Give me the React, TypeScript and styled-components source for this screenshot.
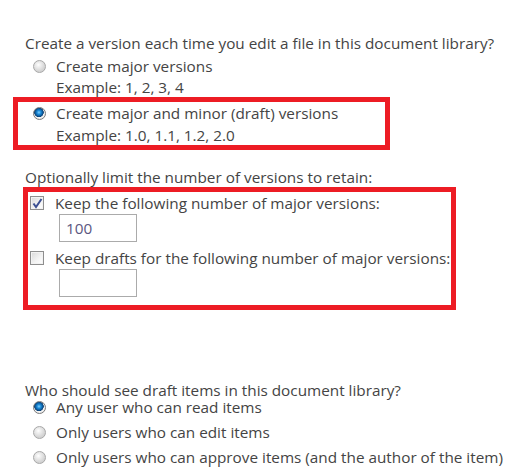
import React from "react";
import styled, { createGlobalStyle } from "styled-components";

const Global = createGlobalStyle`
  html, body { margin: 0; padding: 0; background: #fff; }
  body { font-family: "Open Sans", "Noto Sans", sans-serif; color: #444; }
`;

const Page = styled.div`
  width: 524px;
  height: 473px;
  padding-top: 31px;
  box-sizing: border-box;
  font-size: 15.3px;
  overflow: hidden;
`;

const Question = styled.div<{ $h: number }>`
  padding-left: 25px;
  height: ${(p) => p.$h}px;
  line-height: ${(p) => p.$h}px;
  white-space: nowrap;
`;

const Options = styled.div<{ $indent: number }>`
  padding-left: ${(p) => p.$indent}px;
`;

const Highlight = styled.div<{ $left: number; $width: number; $pad: number; $pb?: number }>`
  margin-left: ${(p) => p.$left}px;
  width: ${(p) => p.$width}px;
  box-sizing: border-box;
  border: 5px solid #ed1c24;
  padding-left: ${(p) => p.$pad}px;
  padding-bottom: ${(p) => p.$pb ?? 0}px;
`;

const Row = styled.div<{ $h?: number; $pb?: number }>`
  display: flex;
  align-items: center;
  height: ${(p) => p.$h ?? 22}px;
  line-height: ${(p) => p.$h ?? 22}px;
  margin-bottom: ${(p) => p.$pb ?? 0}px;
  white-space: nowrap;
`;

const Sub = styled.div<{ $h?: number }>`
  padding-left: 23px;
  height: ${(p) => p.$h ?? 22}px;
  line-height: ${(p) => p.$h ?? 22}px;
  white-space: nowrap;
`;

const RadioDot = styled.span<{ $on?: boolean }>`
  flex: none;
  width: 13px;
  height: 13px;
  border-radius: 50%;
  box-sizing: border-box;
  border: 1px solid ${(p) => (p.$on ? "#7a7a7a" : "#a8a8a8")};
  background: ${(p) =>
    p.$on
      ? "radial-gradient(circle at 45% 40%, #7fd0ff 0, #1a8ad8 2px, #0a4f8c 4px, #0a3d70 4.5px, #f4f4f4 5px, #dcdcdc 100%)"
      : "radial-gradient(circle at 40% 35%, #ffffff 0, #f0f0f0 2px, #d6d6d6 6px, #c8c8c8 100%)"};
  margin-right: 10px;
`;

const Box = styled.span`
  flex: none;
  width: 14px;
  height: 14px;
  box-sizing: border-box;
  border: 1px solid #8e8e8e;
  background: linear-gradient(135deg, #d8d8d8 0%, #f4f4f4 60%, #ffffff 100%);
  box-shadow: inset 0 0 0 1px #f2f2f2;
  margin-right: 11px;
  display: flex;
  align-items: center;
  justify-content: center;
`;

const Input = styled.div`
  margin-left: 29px;
  width: 78px;
  height: 28px;
  box-sizing: border-box;
  border: 1px solid #ababab;
  background: #fff;
  padding-left: 6px;
  line-height: 26px;
  color: #5b5680;
`;

const Gap = styled.div<{ $h: number }>`
  height: ${(p) => p.$h}px;
`;

const Radio = ({
  on,
  h,
  pb,
  children,
}: {
  on?: boolean;
  h?: number;
  pb?: number;
  children: React.ReactNode;
}) => (
  <Row $h={h} $pb={pb}>
    <RadioDot $on={on} />
    <span>{children}</span>
  </Row>
);

const Check = ({ on, children }: { on?: boolean; children: React.ReactNode }) => (
  <Row $h={22}>
    <Box>
      {on && (
        <svg width="11" height="11" viewBox="0 0 11 11">
          <path d="M1.5 5.5 L4 9 L9.5 1" fill="none" stroke="#3c4f92" strokeWidth="2" />
        </svg>
      )}
    </Box>
    <span>{children}</span>
  </Row>
);

export default function App() {
  return (
    <Page>
      <Global />
      <Question $h={24}>Create a version each time you edit a file in this document library?</Question>
      <Options $indent={33}>
        <Radio>Create major versions</Radio>
        <Sub $h={20}>Example: 1, 2, 3, 4</Sub>
      </Options>
      <Highlight $left={13} $width={377} $pad={15}>
        <Radio on h={23}>Create major and minor (draft) versions</Radio>
        <Sub $h={20}>Example: 1.0, 1.1, 1.2, 2.0</Sub>
      </Highlight>
      <Gap $h={18} />
      <Question $h={19}>Optionally limit the number of versions to retain:</Question>
      <Highlight $left={23} $width={433} $pad={2} $pb={8}>
        <Check on>Keep the following number of major versions:</Check>
        <Input>100</Input>
        <Gap $h={5} />
        <Check>Keep drafts for the following number of major versions:</Check>
        <Input />
      </Highlight>
      <Gap $h={71} />
      <Question $h={18}>Who should see draft items in this document library?</Question>
      <Options $indent={33}>
        <Radio on h={16} pb={9}>Any user who can read items</Radio>
        <Radio h={16} pb={9}>Only users who can edit items</Radio>
        <Radio h={16} pb={9}>Only users who can approve items (and the author of the item)</Radio>
      </Options>
    </Page>
  );
}
